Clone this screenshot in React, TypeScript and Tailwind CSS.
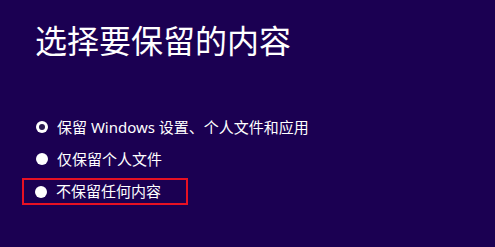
import React from 'react';

const font = { fontFamily: '"Noto Sans", "Noto Sans CJK SC", sans-serif' };

function Radio({ checked }: { checked?: boolean }) {
  return (
    <span className="w-[12px] h-[12px] rounded-full bg-white flex items-center justify-center shrink-0">
      {checked && <span className="w-[6px] h-[6px] rounded-full bg-[#2a1a50]" />}
    </span>
  );
}

export default function App() {
  return (
    <div className="w-[495px] h-[247px] bg-[#1b0052] text-white overflow-hidden pl-[35px] pt-[22px]" style={font}>
      <h1 className="text-[32px] leading-[37px] font-normal">选择要保留的内容</h1>

      <div className="mt-[52px] ml-[1px] flex flex-col text-[15px]">
        <div className="h-8 flex items-center gap-[9px]">
          <Radio checked />
          <span>保留 Windows 设置、个人文件和应用</span>
        </div>
        <div className="h-8 flex items-center gap-[9px]">
          <Radio />
          <span>仅保留个人文件</span>
        </div>
        <div className="mt-[3px] -ml-[14px] w-[166px] h-[27px] border-2 border-[#e81123] flex items-center gap-[9px] pl-[11px]">
          <Radio />
          <span>不保留任何内容</span>
        </div>
      </div>
    </div>
  );
}
